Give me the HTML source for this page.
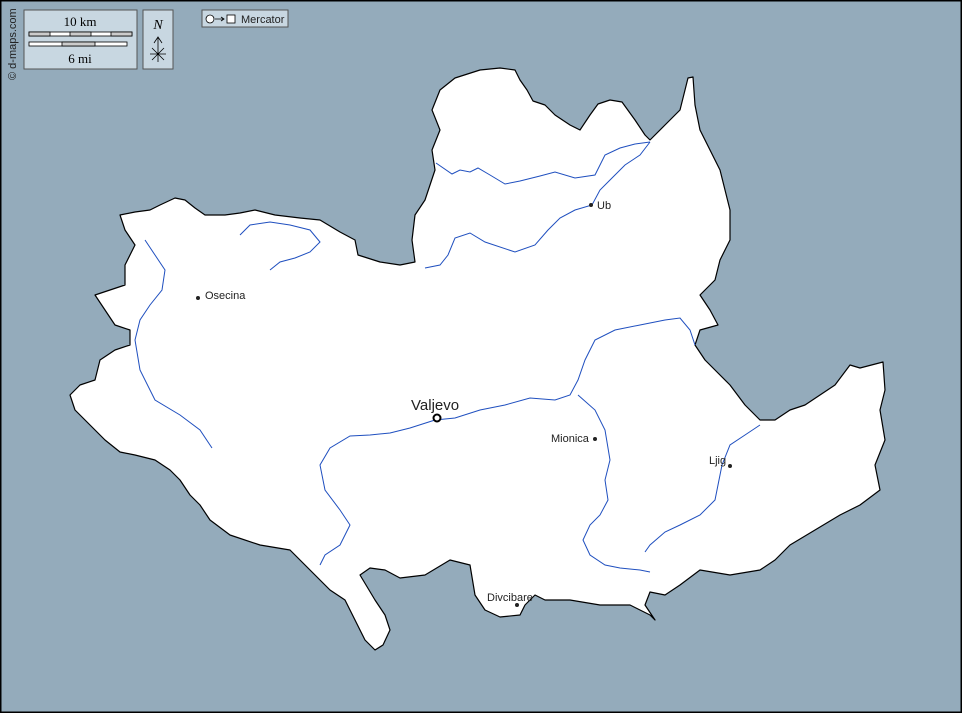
<!DOCTYPE html>
<html><head><meta charset="utf-8"><style>
html,body{margin:0;padding:0;width:962px;height:713px;overflow:hidden;background:#94abbb}
svg{display:block}
text{font-family:"Liberation Sans",sans-serif}
</style></head><body>
<svg width="962" height="713" viewBox="0 0 962 713" xmlns="http://www.w3.org/2000/svg">
<rect x="0" y="0" width="962" height="713" fill="#94abbb" stroke="#000" stroke-width="3"/>
<path fill="#fff" stroke="#000" stroke-width="1.2" stroke-linejoin="round" d="M120,215 L135,212 150,210 160,205 175,198 185,200 195,208 205,215 225,215 240,213 255,210 275,215 300,218 320,220 340,232 355,240 358,255 380,262 400,265 415,262 412,240 415,215 425,200 430,185 435,170 432,150 440,130 432,110 440,90 455,78 480,70 500,68 515,70 520,80 527,90 533,101 545,105 555,115 570,125 580,130 590,115 598,104 610,100 622,102 635,120 645,135 650,140 665,125 680,110 685,90 688,78 693,77 695,105 700,130 710,150 720,170 725,190 730,210 730,240 720,260 715,280 700,295 710,310 718,325 700,330 695,345 705,360 715,370 730,385 745,405 760,420 775,420 790,410 805,405 820,395 835,385 850,365 860,368 883,362 885,390 880,410 885,440 875,465 880,490 860,505 840,515 815,530 790,545 775,560 760,570 730,575 700,570 680,585 665,595 650,592 645,605 655,620 650,615 630,605 600,605 570,600 545,600 535,595 525,605 520,615 500,617 485,610 475,595 470,565 450,560 425,575 400,578 385,570 370,568 360,575 375,600 385,615 390,630 383,645 375,650 365,640 355,620 345,600 330,590 320,580 310,570 300,560 290,550 260,545 230,535 210,520 200,505 190,495 180,480 170,470 155,460 135,455 120,452 105,440 90,425 75,410 70,395 80,385 95,380 100,360 115,350 130,345 130,330 115,325 105,310 95,295 110,290 125,285 125,265 135,245 125,230 Z"/>
<g fill="none" stroke="#1f4fbf" stroke-width="1">
<path d="M436,163 L452,174 460,170 470,172 478,168 490,175 505,184 520,181 540,176 555,172 575,178 595,175 605,155 620,148 635,144 650,142"/>
<path d="M650,142 L640,155 625,165 610,180 600,190 592,205 575,210 560,218 548,230 535,245 515,252 485,242 470,233 455,238 448,255 440,265 425,268"/>
<path d="M145,240 L155,255 165,270 162,290 150,305 140,320 135,340 140,370 155,400 180,415 200,430 212,448"/>
<path d="M240,235 L250,225 270,222 290,225 310,230 320,242 310,252 295,258 280,262 270,270"/>
<path d="M435,420 L455,418 480,410 505,405 530,398 555,400 570,395 578,380 585,360 595,340 615,330 640,325 665,320 680,318 690,330 695,345"/>
<path d="M435,420 L410,428 390,433 370,435 350,436 330,448 320,465 325,490 340,510 350,525 340,545 325,555 320,565"/>
<path d="M578,395 L595,410 605,430 610,460 605,480 608,500 600,515 590,525 583,540 590,555 605,565 620,568 640,570 650,572"/>
<path d="M760,425 L745,435 730,445 722,465 718,485 715,500 700,515 680,525 665,532 650,545 645,552"/>
</g>
<g fill="#222">
<circle cx="591" cy="205" r="2"/><circle cx="198" cy="298" r="2"/><circle cx="595" cy="439" r="2"/><circle cx="730" cy="466" r="2"/><circle cx="517" cy="605" r="2"/>
</g>
<circle cx="437" cy="418" r="3.5" fill="#fff" stroke="#000" stroke-width="2"/>
<g font-size="11" fill="#222">
<text x="597" y="209">Ub</text>
<text x="205" y="299">Osecina</text>
<text x="551" y="442">Mionica</text>
<text x="709" y="464">Ljig</text>
<text x="487" y="601">Divcibare</text>
</g>
<text x="411" y="410" font-size="15" fill="#222">Valjevo</text>
<text transform="translate(16,80) rotate(-90)" font-size="11" fill="#222">© d-maps.com</text>
<rect x="24" y="10" width="113" height="59" fill="#c8d7e1" stroke="#555"/>
<text x="80" y="26" font-size="13" text-anchor="middle" font-family="Liberation Serif" style="font-family:'Liberation Serif',serif">10 km</text>
<rect x="29" y="32" width="103" height="4" fill="#fff" stroke="#000" stroke-width="0.8"/>
<rect x="29" y="32" width="21" height="4" fill="#ccc" stroke="#000" stroke-width="0.8"/><rect x="70" y="32" width="21" height="4" fill="#ccc" stroke="#000" stroke-width="0.8"/><rect x="111" y="32" width="21" height="4" fill="#ccc" stroke="#000" stroke-width="0.8"/>
<rect x="29" y="42" width="98" height="4" fill="#fff" stroke="#000" stroke-width="0.8"/>
<rect x="62" y="42" width="33" height="4" fill="#ccc" stroke="#000" stroke-width="0.8"/>
<text x="80" y="63" font-size="13" text-anchor="middle" style="font-family:'Liberation Serif',serif">6 mi</text>
<rect x="143" y="10" width="30" height="59" fill="#c8d7e1" stroke="#555"/>
<text x="158" y="29" font-size="14" font-style="italic" text-anchor="middle" style="font-family:'Liberation Serif',serif">N</text>
<path d="M158,62 L158,38 M154,43 L158,37 162,43 M150,54 L166,54 M152,48 L164,60 M164,48 L152,60" stroke="#000" stroke-width="0.8" fill="none"/>
<rect x="202" y="10" width="86" height="17" fill="#c8d7e1" stroke="#555"/>
<circle cx="210" cy="19" r="4" fill="#fff" stroke="#000" stroke-width="0.8"/>
<path d="M215,19 L224,19 M221,17 L224,19 221,21" stroke="#000" stroke-width="0.8" fill="none"/>
<rect x="227" y="15" width="8" height="8" fill="#fff" stroke="#000" stroke-width="0.8"/>
<text x="241" y="23" font-size="11" fill="#222">Mercator</text>
</svg>
</body></html>
